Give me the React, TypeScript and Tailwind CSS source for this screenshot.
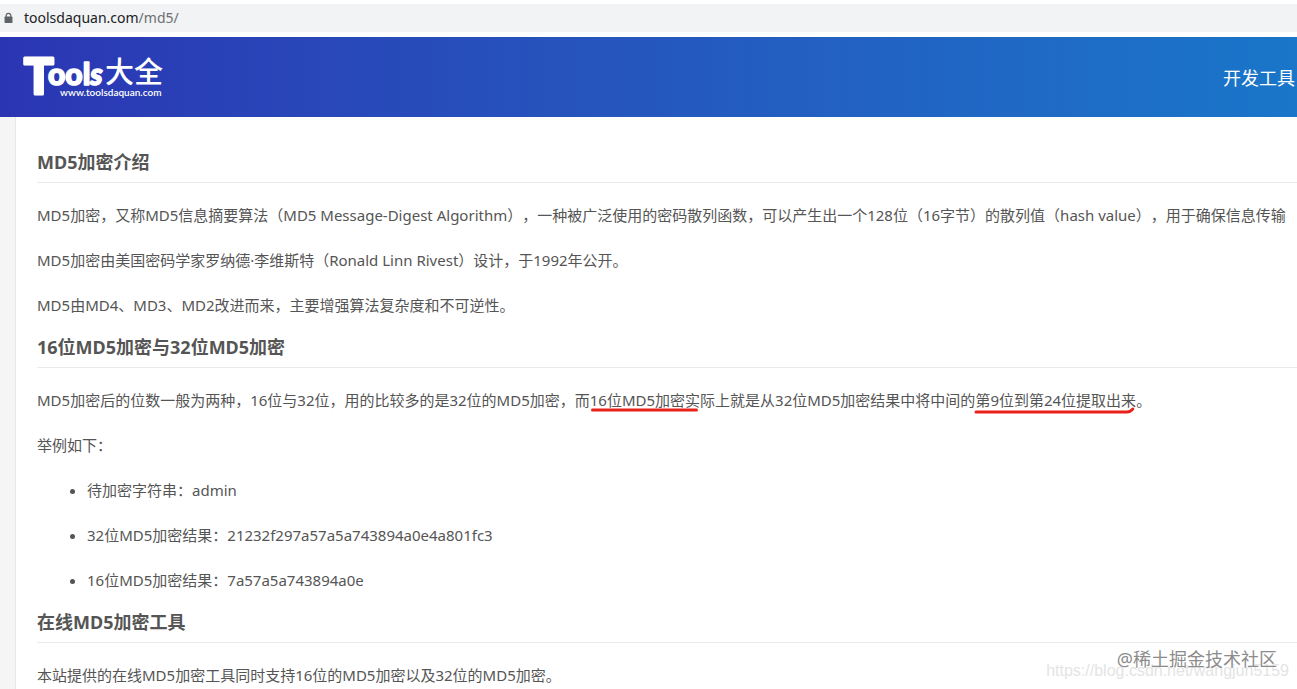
import type { ReactNode } from "react";

function LockIcon() {
  return (
    <svg viewBox="0 0 10 12" className="h-3 w-[9px] shrink-0" aria-hidden="true">
      <path d="M2.4 5V3.4a2.6 2.6 0 0 1 5.2 0V5" fill="none" stroke="#5f6368" strokeWidth="1.3" />
      <rect x="0.6" y="4.2" width="8.8" height="7.4" rx="1" fill="#5f6368" />
    </svg>
  );
}

function AddressBar() {
  return (
    <div className="my-1 flex h-7 shrink-0 items-center gap-[11px] bg-[#f1f3f4] pl-1 text-sm">
      <LockIcon />
      <span className="text-[#202124]">
        toolsdaquan.com<span className="text-[#6b6f73]">/md5/</span>
      </span>
    </div>
  );
}

function Logo() {
  return (
    <svg
      viewBox="0 0 144 46"
      className="h-[46px] w-36 overflow-visible"
      fill="#fff"
      strokeLinejoin="round"
      role="img"
      aria-label="Tools大全"
    >
      <text x="0" y="40" fontFamily="Lato, sans-serif" fontWeight="900" fontSize="49" stroke="#fff" strokeWidth="3">
        T
      </text>
      <text x="24" y="31" fontFamily="Lato, sans-serif" fontWeight="900" fontSize="30" stroke="#fff" strokeWidth="1.6">
        ool
        <tspan fontStyle="italic">s</tspan>
      </text>
      <text x="81" y="29" fontFamily='"Noto Sans CJK SC", sans-serif' fontWeight="500" fontSize="29">
        大全
      </text>
      <text x="36" y="42" fontFamily="Lato, sans-serif" fontWeight="600" fontSize="10">
        www.toolsdaquan.com
      </text>
    </svg>
  );
}

function Header() {
  return (
    <header className="mt-px flex h-20 shrink-0 items-center justify-between bg-linear-to-r from-[#2b35b3] to-[#1976c9] pl-6">
      <a href="/">
        <Logo />
      </a>
      <nav className="pt-0.5">
        <a href="/dev" className="pr-0.5 text-lg text-white">
          开发工具
        </a>
      </nav>
    </header>
  );
}

function Heading({ children }: { children: ReactNode }) {
  return (
    <h2 className="mb-[17px] border-b border-[#ebebeb] pb-2 text-lg leading-6 font-bold">{children}</h2>
  );
}

function Paragraph({ children }: { children: ReactNode }) {
  return <p className="mb-[15px] whitespace-nowrap">{children}</p>;
}

function Marked({ children, hooked = false }: { children: ReactNode; hooked?: boolean }) {
  return (
    <span className="relative inline-block">
      {children}
      <svg
        viewBox="0 0 160 8"
        preserveAspectRatio="none"
        className="absolute top-[21px] left-0 h-2 w-full overflow-visible"
        fill="none"
        stroke="#e8221a"
        strokeWidth="3"
        strokeLinecap="round"
        strokeLinejoin="round"
        aria-hidden="true"
      >
        <path d={hooked ? "M1 6H151Q155 6 157 3" : "M3 4H155"} />
      </svg>
    </span>
  );
}

const examples = [
  "待加密字符串：admin",
  "32位MD5加密结果：21232f297a57a5a743894a0e4a801fc3",
  "16位MD5加密结果：7a57a5a743894a0e",
];

export default function App() {
  return (
    <div className="relative flex h-screen flex-col overflow-hidden bg-white font-['Noto_Sans','Noto_Sans_CJK_SC',sans-serif] [text-spacing-trim:space-all]">
      <AddressBar />
      <Header />
      <div className="flex min-h-0 grow bg-[#f5f5f5] pl-[15px]">
        <main className="h-fit min-h-full grow border-l border-[#e8e8e8] bg-white pt-[33px] pl-[21px] text-[15px] leading-[30px] text-[#555]">
          <Heading>MD5加密介绍</Heading>
          <Paragraph>
            MD5加密，又称MD5信息摘要算法（MD5 Message-Digest Algorithm），一种被广泛使用的密码散列函数，可以产生出一个128位（16字节）的散列值（hash
            value），用于确保信息传输
          </Paragraph>
          <Paragraph>MD5加密由美国密码学家罗纳德·李维斯特（Ronald Linn Rivest）设计，于1992年公开。</Paragraph>
          <Paragraph>MD5由MD4、MD3、MD2改进而来，主要增强算法复杂度和不可逆性。</Paragraph>
          <Heading>16位MD5加密与32位MD5加密</Heading>
          <Paragraph>
            MD5加密后的位数一般为两种，16位与32位，用的比较多的是32位的MD5加密，而
            <Marked>16位MD5加密实</Marked>际上就是从32位MD5加密结果中将中间的
            <Marked hooked>第9位到第24位提取出来</Marked>。
          </Paragraph>
          <Paragraph>举例如下：</Paragraph>
          <ul className="list-disc pl-[50px]">
            {examples.map((text) => (
              <li key={text} className="mb-[15px]">
                {text}
              </li>
            ))}
          </ul>
          <Heading>在线MD5加密工具</Heading>
          <Paragraph>本站提供的在线MD5加密工具同时支持16位的MD5加密以及32位的MD5加密。</Paragraph>
        </main>
      </div>
      <div className="absolute right-2 bottom-2 font-['Liberation_Sans',sans-serif] text-base leading-5 text-[#e4e4e4]">
        https://blog.csdn.net/wangjun5159
      </div>
      <div className="absolute right-5 bottom-[18px] text-lg leading-6 text-[#8c8c8c] [text-shadow:0_0_2px_#fff]">
        @稀土掘金技术社区
      </div>
    </div>
  );
}
